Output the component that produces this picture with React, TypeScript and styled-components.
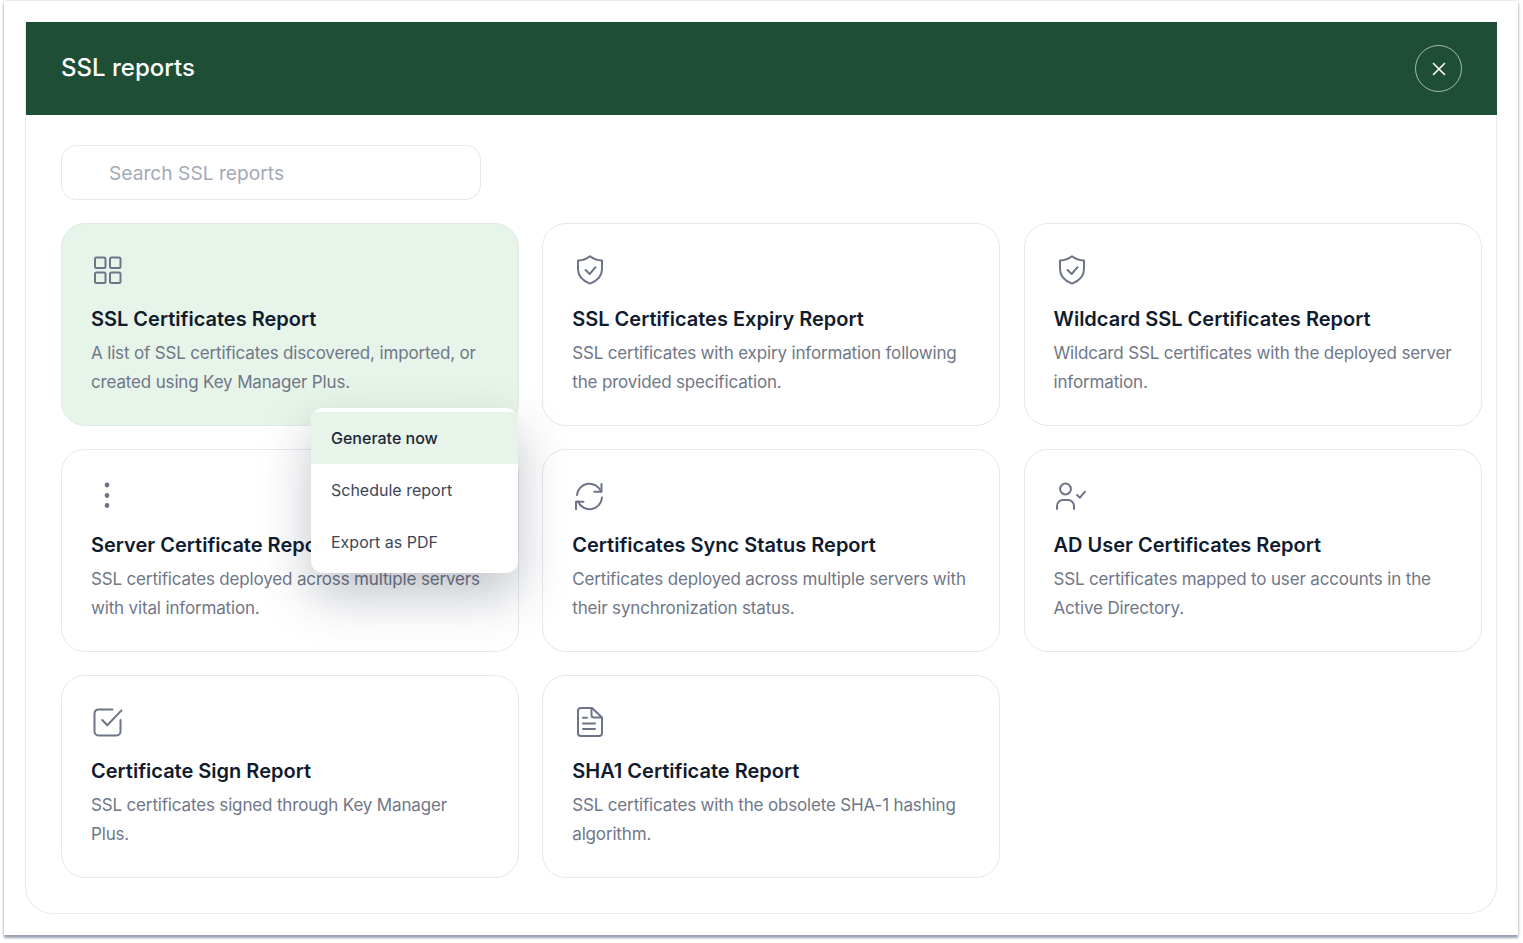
import React from 'react';
import styled, { createGlobalStyle } from 'styled-components';

const GlobalStyle = createGlobalStyle`
  html, body {
    margin: 0;
    padding: 0;
    min-height: 943px;
    background: #fff;
    font-family: Inter, "Noto Sans", sans-serif;
  }
`;

const Frame = styled.div`
  box-sizing: border-box;
  width: 1514px;
  height: 934px;
  margin: 1px 0 8px 4px;
  padding: 21px 21px 21px;
  background: #fff;
  box-shadow: 0 3px 2px rgba(120, 130, 155, 0.7), 0 0 3px rgba(120, 130, 155, 0.4);
`;

const Panel = styled.div`
  box-sizing: border-box;
  height: 892px;
  border: 1px solid #e7e9ee;
  border-top: 0;
  border-radius: 0 0 28px 28px;
`;

const Header = styled.header`
  display: flex;
  align-items: center;
  justify-content: space-between;
  height: 93px;
  margin-right: -1px;
  padding: 0 35px 2px 35px;
  box-sizing: border-box;
  background: #1f4e37;
`;

const HeaderTitle = styled.h1`
  margin: 0;
  color: #fff;
  font-size: 24px;
  font-weight: 500;
`;

const CloseButton = styled.button`
  display: flex;
  align-items: center;
  justify-content: center;
  width: 47px;
  height: 47px;
  margin-top: 2px;
  padding: 0;
  background: transparent;
  border: 1.5px solid rgba(255, 255, 255, 0.6);
  border-radius: 50%;
`;

const Body = styled.div`
  padding: 30px 15px 0 35px;
`;

const SearchInput = styled.input`
  display: block;
  box-sizing: border-box;
  width: 420px;
  height: 55px;
  margin-bottom: 23px;
  padding: 0 0 0 47px;
  border: 1.5px solid #e6e8ed;
  border-radius: 15px;
  outline: none;
  font-family: inherit;
  font-size: 19.2px;

  &::placeholder {
    color: #a3a9b5;
    opacity: 1;
  }
`;

const Grid = styled.div`
  display: grid;
  grid-template-columns: repeat(3, 458px);
  grid-auto-rows: 203px;
  gap: 23px 23.25px;
`;

const Card = styled.article<{ $active?: boolean }>`
  position: relative;
  box-sizing: border-box;
  padding: 29px 29px 0 29px;
  border: 1.5px solid ${({ $active }) => ($active ? '#e1ebe5' : '#e6e8ed')};
  border-radius: 24px;
  background: ${({ $active }) => ($active ? '#e7f4e9' : '#fff')};
  z-index: ${({ $active }) => ($active ? 2 : 'auto')};
`;

const IconBox = styled.svg`
  display: block;
  width: 34px;
  height: 34px;
  margin-left: 1px;
  fill: none;
  stroke: #6c7486;
  stroke-width: 2;
  stroke-linecap: round;
  stroke-linejoin: round;
`;

const CardTitle = styled.h2`
  margin: 17px 0 0;
  color: #111b2e;
  font-size: 20px;
  font-weight: 600;
  line-height: 30px;
`;

const CardText = styled.p`
  margin: 5px 0 0;
  color: #6f7787;
  font-size: 17px;
  font-weight: 400;
  letter-spacing: -0.16px;
  line-height: 29px;
  white-space: pre;
`;

const Menu = styled.div`
  position: absolute;
  top: 184px;
  right: 0;
  box-sizing: border-box;
  width: 207px;
  height: 165px;
  padding: 4px 0;
  background: #fff;
  border-radius: 12px;
  box-shadow: 0 22px 50px rgba(30, 40, 60, 0.28);
`;

const MenuItem = styled.div<{ $active?: boolean }>`
  display: flex;
  align-items: center;
  height: 52px;
  padding-left: 20px;
  color: ${({ $active }) => ($active ? '#1b2638' : '#3d4657')};
  background: ${({ $active }) => ($active ? '#e7f4e9' : 'transparent')};
  font-size: 16px;
  font-weight: ${({ $active }) => ($active ? 500 : 400)};
`;

const GridIcon = () => (
  <IconBox viewBox="0 0 34 34">
    <rect x="3" y="4.5" width="10.5" height="10.5" rx="1.5" />
    <rect x="18" y="4.5" width="10.5" height="10.5" rx="1.5" />
    <rect x="3" y="19.5" width="10.5" height="10.5" rx="1.5" />
    <rect x="18" y="19.5" width="10.5" height="10.5" rx="1.5" />
  </IconBox>
);

const ShieldIcon = () => (
  <IconBox viewBox="0 0 34 34">
    <path d="M17 3.2C20 5.7 24 7.2 29 7.6V16C29 23 24 28 17 30.6C10 28 5 23 5 16V7.6C10 7.2 14 5.7 17 3.2Z" />
    <path d="M12.5 17l4.2 4 5.8-6.8" />
  </IconBox>
);

const DotsIcon = () => (
  <IconBox viewBox="0 0 34 34">
    <circle cx="15" cy="6" r="1.4" fill="#6c7486" />
    <circle cx="15" cy="16.5" r="1.4" fill="#6c7486" />
    <circle cx="15" cy="26.5" r="1.4" fill="#6c7486" />
  </IconBox>
);

const SyncIcon = () => (
  <IconBox viewBox="0 0 34 34">
    <path d="M4 16A12.5 12.5 0 0 1 28 12.4" />
    <path d="M28.5 5v7.7h-7.2" />
    <path d="M29 18.5A12.5 12.5 0 0 1 5 22.5" />
    <path d="M3 30.3v-7.6h7.4" />
  </IconBox>
);

const UserCheckIcon = () => (
  <IconBox viewBox="0 0 34 34">
    <circle cx="10.5" cy="10" r="5.4" />
    <path d="M2 30v-3a6 6 0 0 1 6-6h5a6 6 0 0 1 6 6v3" />
    <path d="M22 16l3 2.7 5-6" />
  </IconBox>
);

const CheckSquareIcon = () => (
  <IconBox viewBox="0 0 34 34">
    <path d="M20.5 4.4H6.5a4 4 0 0 0-4 4v18a4 4 0 0 0 4 4h18a4 4 0 0 0 4-4V15" />
    <path d="M10.3 15l5 5.3L29.5 5.4" />
  </IconBox>
);

const FileIcon = () => (
  <IconBox viewBox="0 0 34 34">
    <path d="M19 3H8a3 3 0 0 0-3 3v22a3 3 0 0 0 3 3h18a3 3 0 0 0 3-3V12.5Z" />
    <path d="M18.5 3.5V10a2.5 2.5 0 0 0 2.5 2.5h7.5" />
    <path d="M10 12.7h4M10 18.4h12M10 23.9h12" />
  </IconBox>
);

const reports = [
  {
    icon: <GridIcon />,
    title: 'SSL Certificates Report',
    text: 'A list of SSL certificates discovered, imported, or\ncreated using Key Manager Plus.',
    active: true,
  },
  {
    icon: <ShieldIcon />,
    title: 'SSL Certificates Expiry Report',
    text: 'SSL certificates with expiry information following\nthe provided specification.',
  },
  {
    icon: <ShieldIcon />,
    title: 'Wildcard SSL Certificates Report',
    text: 'Wildcard SSL certificates with the deployed server\ninformation.',
  },
  {
    icon: <DotsIcon />,
    title: 'Server Certificate Report',
    text: 'SSL certificates deployed across multiple servers\nwith vital information.',
  },
  {
    icon: <SyncIcon />,
    title: 'Certificates Sync Status Report',
    text: 'Certificates deployed across multiple servers with\ntheir synchronization status.',
  },
  {
    icon: <UserCheckIcon />,
    title: 'AD User Certificates Report',
    text: 'SSL certificates mapped to user accounts in the\nActive Directory.',
  },
  {
    icon: <CheckSquareIcon />,
    title: 'Certificate Sign Report',
    text: 'SSL certificates signed through Key Manager\nPlus.',
  },
  {
    icon: <FileIcon />,
    title: 'SHA1 Certificate Report',
    text: 'SSL certificates with the obsolete SHA-1 hashing\nalgorithm.',
  },
];

export default function App() {
  return (
    <>
      <GlobalStyle />
      <Frame>
        <Panel>
          <Header>
            <HeaderTitle>SSL reports</HeaderTitle>
            <CloseButton aria-label="Close">
              <svg width="14" height="14" viewBox="0 0 14 14" fill="none" stroke="#fff" strokeWidth="1.6" strokeLinecap="round">
                <path d="M1.5 1.5l11 11M12.5 1.5l-11 11" />
              </svg>
            </CloseButton>
          </Header>
          <Body>
            <SearchInput placeholder="Search SSL reports" />
            <Grid>
              {reports.map((report) => (
                <Card key={report.title} $active={report.active}>
                  {report.icon}
                  <CardTitle>{report.title}</CardTitle>
                  <CardText>{report.text}</CardText>
                  {report.active && (
                    <Menu>
                      <MenuItem $active>Generate now</MenuItem>
                      <MenuItem>Schedule report</MenuItem>
                      <MenuItem>Export as PDF</MenuItem>
                    </Menu>
                  )}
                </Card>
              ))}
            </Grid>
          </Body>
        </Panel>
      </Frame>
    </>
  );
}
